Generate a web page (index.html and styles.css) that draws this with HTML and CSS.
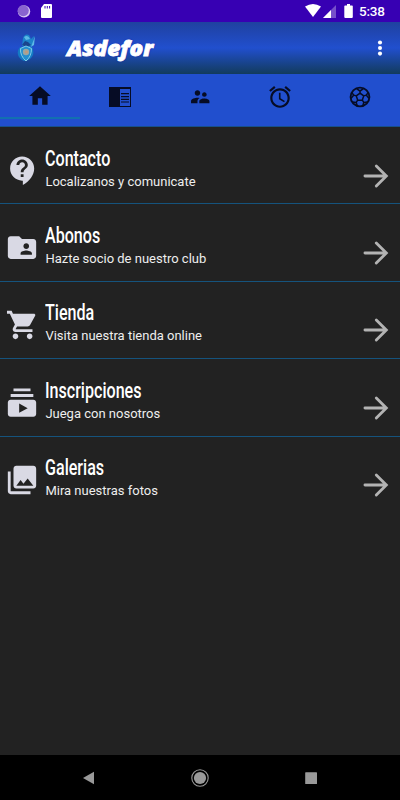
FILE: index.html
```html
<!DOCTYPE html>
<html lang="es">

<head>
    <meta charset="UTF-8">
    <meta name="viewport" content="width=device-width, initial-scale=1.0">
    <title>Asdefor</title>
    <link rel="stylesheet" href="styles.css">
</head>

<body>
    <div class="status-bar">
        <svg class="status-left" width="36" height="22" viewBox="0 0 36 22">
            <circle cx="7" cy="11.4" r="6.2" fill="#d9c8f2" />
            <circle cx="6.2" cy="10.6" r="5.6" fill="#8964cf" />
            <path d="M27 4h7q1 0 1 1v12q0 1-1 1H25q-1 0-1-1V8z" fill="#fff" />
            <path d="M28 6v2.5M30.3 6v2.5M32.6 6v2.5" stroke="#3700b3" stroke-width="1" />
        </svg>
        <svg class="status-right" width="50" height="22" viewBox="0 0 50 22">
            <path d="M1 6.5q8-5 16 0L9 17z" fill="#fff" />
            <path d="M32 5v13H19z" fill="#7650ca" />
            <path d="M27 10v8h-8z" fill="#fff" />
            <path d="M43 4h3v1.5h2q.8 0 .8.8V17q0 1-1 1h-6.500q-1 0-1-1V6.300q0-.8.8-.8H43z" fill="#fff" />
        </svg>
        <span class="clock">5:38</span>
    </div>

    <div class="toolbar">
        <svg class="logo" width="20" height="30" viewBox="0 0 20 30">
            <path d="M6 5Q8 0 12 2l2 4 3-3-1 9-5 3-6-2z" fill="#1d83c9" />
            <path d="M7 4q4-3 6 2l-4 1zM18 3l-1 9-3 2z" fill="#5cb9e6" />
            <path d="M5 12l3-4 3 1 3 3-4 2z" fill="#19458d" />
            <path d="M3 14Q-1 19 2 24q3 4 6 4 6-1 8-6 1-5-1-8z" fill="#147ac4" />
            <path d="M3.500 15.500L9 13l5.500 2.500q0 8-5.500 12.500-6-5-5.500-12.500z" fill="#238fd0" stroke="#7fcdea" stroke-width="1" />
            <circle cx="9" cy="19" r="3.200" fill="#9aa6a2" />
            <circle cx="9.500" cy="19" r="1.500" fill="#c09a7e" />
        </svg>
        <h1>Asdefor</h1>
        <svg class="more" width="6" height="18" viewBox="0 0 6 18" fill="#fff">
            <circle cx="3" cy="3.500" r="2.050" />
            <circle cx="3" cy="9" r="2.050" />
            <circle cx="3" cy="14.600" r="2.050" />
        </svg>
    </div>

    <div class="tabs">
        <div class="tab active">
            <svg width="26" height="26" viewBox="0 0 24 24"><path d="M10 20v-6h4v6h5v-8h3L12 3 2 12h3v8z" /></svg>
        </div>
        <div class="tab">
            <svg width="24" height="24" viewBox="0 0 24 24"><path d="M1 2h22v20H1zM12 4v17h10V4z" fill-rule="evenodd" /><path d="M13 8h8v1.200h-8zM13 11h8v1.200h-8zM13 13.800h8V15h-8zM13 16.500h8v1h-8z" /></svg>
        </div>
        <div class="tab">
            <svg width="24" height="24" viewBox="0 0 24 24"><path d="M16.500 12c1.380 0 2.490-1.120 2.490-2.500S17.880 7 16.500 7 14 8.120 14 9.500s1.120 2.500 2.500 2.500zM9 11c1.660 0 2.990-1.340 2.990-3S10.660 5 9 5 6 6.340 6 8s1.340 3 3 3zm7.500 3c-1.830 0-5.500.92-5.500 2.750V19h11v-2.250c0-1.830-3.670-2.750-5.500-2.750zM9 13c-2.330 0-7 1.170-7 3.500V19h7v-2.250c0-.85.33-2.340 2.370-3.470C10.500 13.100 9.660 13 9 13z" transform="translate(1.200 .7) scale(.92)" /></svg>
        </div>
        <div class="tab">
            <svg width="26" height="26" viewBox="0 0 24 24"><path d="M22 5.720l-4.600-3.860-1.290 1.530 4.600 3.860L22 5.720zM7.880 3.390L6.600 1.860 2 5.710l1.290 1.530 4.590-3.850zM12.500 8H11v6l4.750 2.850.75-1.230-4-2.370V8zM12 4c-4.970 0-9 4.030-9 9s4.020 9 9 9c4.970 0 9-4.030 9-9s-4.030-9-9-9zm0 16c-3.870 0-7-3.130-7-7s3.130-7 7-7 7 3.130 7 7-3.130 7-7 7z" /></svg>
        </div>
        <div class="tab">
            <svg width="24" height="24" viewBox="0 0 24 24" fill="none" stroke="#060c25" stroke-width="1.500"><circle cx="12" cy="12" r="9.400" stroke-width="1.900" /><path d="M12 8.200l3.700 2.700-1.400 4.300H9.700l-1.400-4.300zM12 8.200V6L8.500 3.700M12 6l3.500-2.300M15.700 10.900l2.500-.8 2.300-2.700M18.200 10.100l2.700 3.200M14.300 15.200l1.500 2.200-1 3.400M15.800 17.400l3.600-.3M9.700 15.200l-1.500 2.200 1 3.400M8.200 17.400l-3.600-.3M8.300 10.900l-2.500-.8-2.300-2.700M5.800 10.100l-2.700 3.200" /></svg>
        </div>
    </div>

    <div class="menu">
        <div class="menu-item">
            <svg class="icon" viewBox="0 0 24 24"><path d="M11.500 2C6.810 2 3 5.810 3 10.500S6.810 19 11.500 19h.5v3c4.860-2.340 8-7 8-11.500C20 5.810 16.190 2 11.500 2zm1 14.500h-2v-2h2v2zm0-3.500h-2c0-3.250 3-3 3-5 0-1.100-.9-2-2-2s-2 .9-2 2h-2c0-2.210 1.790-4 4-4s4 1.790 4 4c0 2.500-3 2.750-3 5z" transform="translate(.6 .5)" /></svg>
            <div class="info">
                <h2>Contacto</h2>
                <p>Localizanos y comunicate</p>
            </div>
            <svg class="arrow" viewBox="0 0 24 24"><path d="M4.200 12h15M12.200 4.900l7.100 7.100-7.100 7.100" /></svg>
        </div>
        <div class="menu-item">
            <svg class="icon" viewBox="0 0 24 24"><path d="M20 6h-8l-2-2H4c-1.100 0-1.990.9-1.990 2L2 18c0 1.100.9 2 2 2h16c1.100 0 2-.9 2-2V8c0-1.100-.9-2-2-2zm-5 3c1.100 0 2 .9 2 2s-.9 2-2 2-2-.9-2-2 .9-2 2-2zm4 8h-8v-1c0-1.330 2.670-2 4-2s4 .67 4 2v1z" transform="translate(0 .4)" /></svg>
            <div class="info">
                <h2>Abonos</h2>
                <p>Hazte socio de nuestro club</p>
            </div>
            <svg class="arrow" viewBox="0 0 24 24"><path d="M4.200 12h15M12.200 4.900l7.100 7.100-7.100 7.100" /></svg>
        </div>
        <div class="menu-item">
            <svg class="icon" viewBox="0 0 24 24"><path d="M7 18c-1.100 0-1.990.9-1.990 2S5.900 22 7 22s2-.9 2-2-.9-2-2-2zM1 2v2h2l3.600 7.590-1.350 2.450c-.16.28-.25.61-.25.96 0 1.100.9 2 2 2h12v-2H7.420c-.14 0-.25-.11-.25-.25l.03-.12.9-1.630h7.450c.75 0 1.410-.41 1.750-1.030l3.580-6.490c.08-.14.12-.31.12-.48 0-.55-.45-1-1-1H5.210l-.94-2H1zm16 16c-1.100 0-1.990.9-1.990 2s.89 2 1.990 2 2-.9 2-2-.9-2-2-2z" transform="translate(.4 0)" /></svg>
            <div class="info">
                <h2>Tienda</h2>
                <p>Visita nuestra tienda online</p>
            </div>
            <svg class="arrow" viewBox="0 0 24 24"><path d="M4.200 12h15M12.200 4.900l7.100 7.100-7.100 7.100" /></svg>
        </div>
        <div class="menu-item">
            <svg class="icon" viewBox="0 0 24 24"><path d="M20 8H4V6h16v2zm-2-6H6v2h12V2zm4 10v8c0 1.100-.9 2-2 2H4c-1.100 0-2-.9-2-2v-8c0-1.100.9-2 2-2h16c1.100 0 2 .9 2 2zm-6 4l-6-3.270v6.530L16 16z" transform="translate(0 .4)" /></svg>
            <div class="info">
                <h2>Inscripciones</h2>
                <p>Juega con nosotros</p>
            </div>
            <svg class="arrow" viewBox="0 0 24 24"><path d="M4.200 12h15M12.200 4.900l7.100 7.100-7.100 7.100" /></svg>
        </div>
        <div class="menu-item">
            <svg class="icon" viewBox="0 0 24 24"><path d="M22 16V4c0-1.100-.9-2-2-2H8c-1.100 0-2 .9-2 2v12c0 1.100.9 2 2 2h12c1.100 0 2-.9 2-2zm-11-4l2.030 2.710L16 11l4 5H8l3-4zM2 6v14c0 1.100.9 2 2 2h14v-2H4V6H2z" /></svg>
            <div class="info">
                <h2>Galerias</h2>
                <p>Mira nuestras fotos</p>
            </div>
            <svg class="arrow" viewBox="0 0 24 24"><path d="M4.200 12h15M12.200 4.900l7.100 7.100-7.100 7.100" /></svg>
        </div>
    </div>

    <div class="nav-bar">
        <svg width="18" height="18" viewBox="0 0 18 18"><path d="M3 9l11-6.200v12.400z" fill="#999" /></svg>
        <svg width="18" height="18" viewBox="0 0 18 18"><circle cx="9" cy="9" r="8.200" fill="none" stroke="#999" stroke-width="1.100" /><circle cx="9" cy="9" r="6.100" fill="#999" /></svg>
        <svg width="18" height="18" viewBox="0 0 18 18"><rect x="3.200" y="3.200" width="11.800" height="11.800" rx=".6" fill="#999" /></svg>
    </div>
</body>

</html>
```
FILE: styles.css
```css
* {
    box-sizing: border-box;
}

body {
    margin: 0;
    height: 800px;
    display: flex;
    flex-direction: column;
    overflow: hidden;
    background-color: #222;
    font-family: Roboto, sans-serif;
    color: #fff;
}

svg {
    display: block;
    flex: none;
}

h1,
h2,
p {
    margin: 0;
}

.status-bar {
    display: flex;
    align-items: center;
    height: 22px;
    padding: 0 16px 0 17px;
    background-color: #3700b3;
}

.status-right {
    margin-left: auto;
}

.clock {
    width: 25px;
    margin-left: 5px;
    font-size: 13.500px;
    font-weight: 500;
    line-height: 22px;
    letter-spacing: -0.2px;
    white-space: nowrap;
}

.toolbar {
    display: flex;
    align-items: center;
    height: 52px;
    padding: 0 17px 0 17px;
    background: linear-gradient(#1f419f, #214fce 50%, #123b5c);
}

.toolbar h1 {
    margin-left: 30px;
    font-family: "Open Sans", sans-serif;
    font-size: 21px;
    font-weight: 800;
    font-style: italic;
    line-height: 30px;
    -webkit-text-stroke: 0.8px #fff;
    text-shadow: 0 0 2px #0008a8;
    transform: scaleX(1.075);
    transform-origin: left;
}

.more {
    margin-left: auto;
}

.tabs {
    display: flex;
    height: 53px;
    background-color: #214fce;
    border-bottom: 1px solid #17508a;
}

.tab {
    flex: 1;
    display: flex;
    justify-content: center;
    align-items: center;
    height: 45px;
    fill: #060c25;
}

.tab.active {
    border-bottom: 2px solid #1270b0;
    padding-top: 1px;
}

.menu {
    flex: 1;
}

.menu-item {
    display: flex;
    height: 77.400px;
    padding: 0 7px 0 5px;
    border-bottom: 1px solid #15537d;
}

.menu-item:last-child {
    border-bottom: none;
}

.icon {
    width: 34px;
    height: 34px;
    margin-top: 26px;
    fill: #d9d9e4;
}

.info {
    flex: 1;
    margin: 17.500px 0 0 6.400px;
}

.info h2 {
    width: max-content;
    font-size: 22.500px;
    font-weight: 500;
    line-height: 26px;
    transform: scaleX(0.715);
    transform-origin: left;
}

.info p {
    margin-top: 2px;
    font-size: 13px;
    line-height: 17px;
    color: #eee;
}

.arrow {
    width: 34px;
    height: 34px;
    margin-top: 31.500px;
    fill: none;
    stroke: #b3b3b3;
    stroke-width: 2;
    stroke-linecap: round;
}

.nav-bar {
    display: flex;
    justify-content: space-between;
    align-items: center;
    height: 45px;
    padding: 0 80px;
    background-color: #000;
}
```
